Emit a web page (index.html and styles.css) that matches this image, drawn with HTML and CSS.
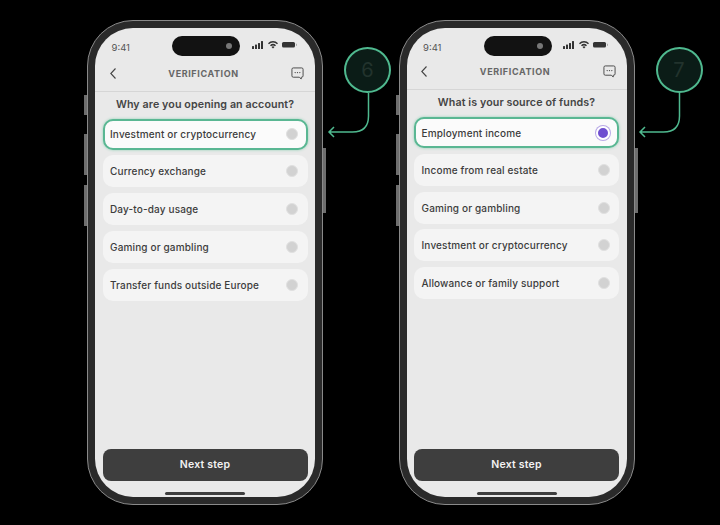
FILE: index.html
```html
<!DOCTYPE html>
<html lang="en">
<head>
<meta charset="utf-8">
<title>Verification</title>
<link rel="stylesheet" href="styles.css">
</head>
<body>
<main class="stage">
  <section class="phone">
    <i class="side side-a"></i><i class="side side-b"></i><i class="side side-c"></i><i class="side side-d"></i>
    <div class="screen">
      <div class="status">
        <span class="time">9:41</span>
        <div class="island"><i class="lens"></i></div>
        <svg class="status-icons" width="46" height="10" viewBox="0 0 46 10"><g fill="#333"><rect x="0" y="6" width="2" height="3" rx=".5"/><rect x="3" y="4.500" width="2" height="4.500" rx=".5"/><rect x="6" y="3" width="2" height="6" rx=".5"/><rect x="9" y="1" width="2" height="8" rx=".5"/><path d="M21 8.500l-1.500-1.600a2.200 2.200 0 0 1 3 0zM18 5.300a4.300 4.300 0 0 1 6 0l-1 1a3 3 0 0 0-4 0zM16 3.200a7 7 0 0 1 10 0l-1 1a5.600 5.600 0 0 0-8 0z"/><rect x="30" y="2" width="13" height="5.500" rx="1.500"/><rect x="44" y="3.800" width="1" height="2" fill="#aaa"/></g></svg>
      </div>
      <header class="nav nav-low">
        <svg width="6" height="11" viewBox="0 0 6 11"><path d="M5.500 .5L.8 5.500l4.700 5" fill="none" stroke="#444" stroke-width="1.100"/></svg>
        <span class="nav-title">VERIFICATION</span>
        <svg width="13" height="13" viewBox="0 0 14 14"><path d="M2.500 1h9A1.500 1.500 0 0 1 13 2.500v7A1.500 1.500 0 0 1 11.500 11H11v2l-2-2H2.500A1.500 1.500 0 0 1 1 9.500v-7A1.500 1.500 0 0 1 2.500 1z" fill="none" stroke="#444" stroke-width="1"/><g fill="#444"><circle cx="4.500" cy="6" r=".7"/><circle cx="7" cy="6" r=".7"/><circle cx="9.500" cy="6" r=".7"/></g></svg>
      </header>
      <h1 class="question">Why are you opening an account?</h1>
      <ul class="options">
        <li class="option selected"><span>Investment or cryptocurrency</span><i class="radio"></i></li>
        <li class="option"><span>Currency exchange</span><i class="radio"></i></li>
        <li class="option"><span>Day-to-day usage</span><i class="radio"></i></li>
        <li class="option"><span>Gaming or gambling</span><i class="radio"></i></li>
        <li class="option"><span>Transfer funds outside Europe</span><i class="radio"></i></li>
      </ul>
      <button class="next">Next step</button>
      <i class="home"></i>
    </div>
  </section>

  <aside class="callout">
    <div class="badge">6</div>
    <svg class="connector" width="42" height="42" viewBox="0 0 42 42"><path d="M39.500 0v23q0 16-16 16H0M5 34l-5 5 5 5" fill="none" stroke="#4fb98f" stroke-width="1.500"/></svg>
  </aside>

  <section class="phone">
    <i class="side side-a"></i><i class="side side-b"></i><i class="side side-c"></i><i class="side side-d"></i>
    <div class="screen">
      <div class="status">
        <span class="time">9:41</span>
        <div class="island"><i class="lens"></i></div>
        <svg class="status-icons" width="46" height="10" viewBox="0 0 46 10"><g fill="#333"><rect x="0" y="6" width="2" height="3" rx=".5"/><rect x="3" y="4.500" width="2" height="4.500" rx=".5"/><rect x="6" y="3" width="2" height="6" rx=".5"/><rect x="9" y="1" width="2" height="8" rx=".5"/><path d="M21 8.500l-1.500-1.600a2.200 2.200 0 0 1 3 0zM18 5.300a4.300 4.300 0 0 1 6 0l-1 1a3 3 0 0 0-4 0zM16 3.200a7 7 0 0 1 10 0l-1 1a5.600 5.600 0 0 0-8 0z"/><rect x="30" y="2" width="13" height="5.500" rx="1.500"/><rect x="44" y="3.800" width="1" height="2" fill="#aaa"/></g></svg>
      </div>
      <header class="nav">
        <svg width="6" height="11" viewBox="0 0 6 11"><path d="M5.500 .5L.8 5.500l4.700 5" fill="none" stroke="#444" stroke-width="1.100"/></svg>
        <span class="nav-title">VERIFICATION</span>
        <svg width="13" height="13" viewBox="0 0 14 14"><path d="M2.500 1h9A1.500 1.500 0 0 1 13 2.500v7A1.500 1.500 0 0 1 11.500 11H11v2l-2-2H2.500A1.500 1.500 0 0 1 1 9.500v-7A1.500 1.500 0 0 1 2.500 1z" fill="none" stroke="#444" stroke-width="1"/><g fill="#444"><circle cx="4.500" cy="6" r=".7"/><circle cx="7" cy="6" r=".7"/><circle cx="9.500" cy="6" r=".7"/></g></svg>
      </header>
      <h1 class="question">What is your source of funds?</h1>
      <ul class="options">
        <li class="option selected"><span>Employment income</span><i class="radio checked"></i></li>
        <li class="option"><span>Income from real estate</span><i class="radio"></i></li>
        <li class="option"><span>Gaming or gambling</span><i class="radio"></i></li>
        <li class="option"><span>Investment or cryptocurrency</span><i class="radio"></i></li>
        <li class="option"><span>Allowance or family support</span><i class="radio"></i></li>
      </ul>
      <button class="next">Next step</button>
      <i class="home"></i>
    </div>
  </section>

  <aside class="callout">
    <div class="badge">7</div>
    <svg class="connector" width="42" height="42" viewBox="0 0 42 42"><path d="M39.500 0v23q0 16-16 16H0M5 34l-5 5 5 5" fill="none" stroke="#4fb98f" stroke-width="1.500"/></svg>
  </aside>
</main>
</body>
</html>
```

FILE: styles.css
```css
* { box-sizing: border-box; }
html, body { margin: 0; padding: 0; height: 100%; background: #000; overflow: hidden; }
body { font-family: "Inter", "Liberation Sans", sans-serif; }

.stage { display: flex; align-items: flex-start; padding: 20px 0 0 87px; }

.phone {
  position: relative; flex: none; width: 236px; height: 485px; padding: 7px;
  background: #2a2a2a; border: 1.500px solid #8a8a8a; border-radius: 46px;
}
.side { position: absolute; left: -4px; width: 3px; background: #6e6e6e; }
.side-a { top: 74px; height: 20px; }
.side-b { top: 113px; height: 41px; }
.side-c { top: 164px; height: 41px; }
.side-d { left: auto; right: -4px; top: 127px; height: 65px; }

.screen {
  position: relative; height: 100%; display: flex; flex-direction: column;
  background: #e9e9e9; border-radius: 38px; overflow: hidden; padding: 0 7.500px;
}

.status { flex: none; height: 38px; display: flex; align-items: center; justify-content: space-between; padding: 0 10px 0 9px; position: relative; }
.time { font-size: 9.500px; color: #555; }
.island { position: absolute; left: 69.700px; top: 8.200px; width: 68px; height: 19.500px; border-radius: 10px; background: #121212; }
.lens { position: absolute; right: 8.700px; top: 6.700px; width: 6px; height: 6px; border-radius: 50%; background: #777; }
.status-icons { margin-top: -4px; }

.nav {
  flex: none; height: 23.500px; margin: 0 -7.500px .5px; padding: 0 10.500px 12.500px 14.500px; display: flex; align-items: center; justify-content: space-between;
  border-bottom: 1px solid #d6d6d6;
}
.nav-low { height: 25.500px; margin-bottom: 0; padding-bottom: 10.500px; }
.nav-title { font-size: 9px; font-weight: 700; letter-spacing: .6px; color: #666; }

.question { margin: 5px 0 6px; font-size: 10.700px; line-height: 16px; font-weight: 600; letter-spacing: .1px; color: #444; text-align: center; }

.options { list-style: none; margin: 0; padding: 0; display: flex; flex-direction: column; gap: 5.750px; }
.option {
  flex: none; height: 32px; padding: 0 9.500px 0 7.500px; display: flex; align-items: center; justify-content: space-between;
  background: #f4f4f4; border-radius: 10px; font-size: 10px; font-weight: 500; letter-spacing: .15px; color: #3c3c3c;
}
.selected { height: 31px; background: #fbfbfb; border: 2px solid #5ab793; padding: 0 7.500px 0 5.500px; box-shadow: 0 0 3px #8fd0b4; }
.radio { flex: none; width: 12px; height: 12px; border-radius: 50%; background: #d2d2d2; border: 1px solid #e0e0e0; }
.checked { width: 14px; height: 14px; margin-right: -.5px; background: #6f4fd0; border: 2.500px solid #fff; box-shadow: 0 0 0 1px #b8a9e6; }

.next {
  flex: none; margin-top: auto; margin-bottom: 16.500px; height: 32px; border: 0; border-radius: 8px; background: #3e3e3e;
  color: #f2f2f2; font: 600 10.500px "Inter", "Liberation Sans", sans-serif; letter-spacing: .2px;
}
.home { position: absolute; left: 70px; bottom: 2px; width: 80px; height: 3.500px; border-radius: 2px; background: #3e3e3e; }

.callout { flex: none; width: 75.500px; height: 120px; position: relative; }
.badge {
  position: absolute; left: 21px; top: 27px; width: 47px; height: 46px; border-radius: 50%;
  border: 2px solid #4fb98f; background: #0b1c17; color: #22332d;
  display: flex; align-items: center; justify-content: center; font-size: 20px;
}
.connector { position: absolute; left: 5.500px; top: 73px; overflow: visible; }
```
